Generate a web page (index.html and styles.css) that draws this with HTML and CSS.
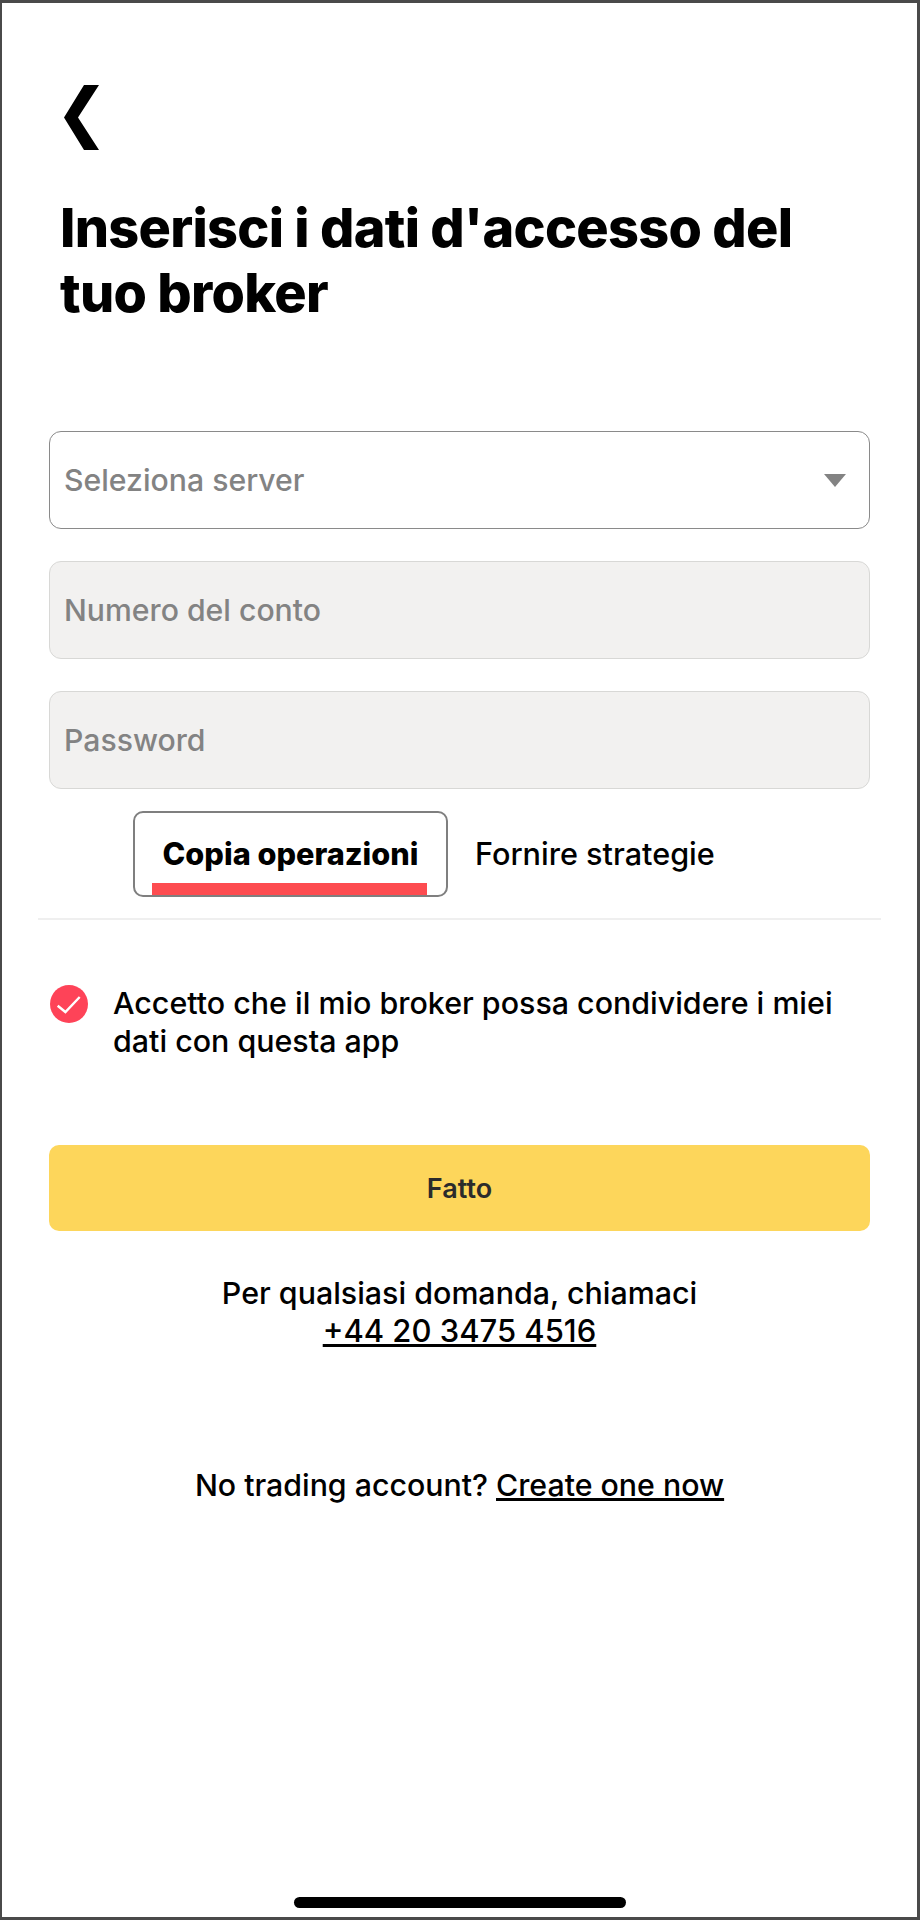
FILE: index.html
```html
<!DOCTYPE html>
<html lang="it">
<head>
<meta charset="UTF-8">
<title>Dati broker</title>
<link rel="stylesheet" href="styles.css">
</head>
<body>

<div class="screen">
  <a class="back-link" href="#">
    <svg width="35" height="65" viewBox="0 0 35 65"><polygon points="20,0 35,0 14,32.5 35,65 20,65 0,32.5" fill="#000"/></svg>
  </a>

  <h1 class="page-title">Inserisci i dati d'accesso del tuo broker</h1>

  <div class="form-fields">
    <div class="field field-select">
      <span>Seleziona server</span>
      <span class="select-arrow"></span>
    </div>
    <div class="field field-disabled"><span>Numero del conto</span></div>
    <div class="field field-disabled"><span>Password</span></div>
  </div>

  <div class="tabs">
    <div class="tab tab-active">Copia operazioni</div>
    <div class="tab">Fornire strategie</div>
  </div>

  <div class="consent">
    <svg class="consent-check" width="38" height="38" viewBox="0 0 38 38">
      <circle cx="19" cy="19" r="19" fill="#fe4358"/>
      <path d="M7.7 20.7L15.4 27L29.7 12" fill="none" stroke="#fff" stroke-width="2.4"/>
    </svg>
    <p>Accetto che il mio broker possa condividere i miei dati con questa app</p>
  </div>

  <button class="done-btn">Fatto</button>

  <p class="help-text">Per qualsiasi domanda, chiamaci<br><a class="help-phone" href="#">+44 20 3475 4516</a></p>

  <p class="signup-text">No trading account? <a href="#">Create one now</a></p>

  <div class="home-bar"></div>
</div>

</body>
</html>
```

FILE: styles.css
```css
body {
  margin: 0;
  font-family: Inter, "Liberation Sans", sans-serif;
  color: #000;
}

a {
  color: inherit;
}

.screen {
  box-sizing: border-box;
  width: 920px;
  height: 1920px;
  border: 3px solid #4a4a4a;
  border-left-width: 2px;
  background: #fff;
  display: flex;
  flex-direction: column;
  padding: 82px 47px 9px 47px;
}

.back-link {
  display: block;
  height: 65px;
  margin-left: 15px;
}

.page-title {
  margin: 45px 0 0 11px;
  width: 780px;
  font-size: 54px;
  line-height: 65px;
  font-weight: 800;
  letter-spacing: -0.72px;
}

/* pola formularza */
.form-fields {
  margin-top: 106px;
  display: flex;
  flex-direction: column;
  gap: 32px;
}

.field {
  box-sizing: border-box;
  height: 98px;
  border-radius: 12px;
  border: 1px solid #d8d8d6;
  padding: 0 14px;
  display: flex;
  align-items: center;
  justify-content: space-between;
  font-size: 30.2px;
  font-weight: 500;
  color: #838383;
}

.field-select {
  border: 1.5px solid #8a8a8a;
  background: #fff;
}

.field-disabled {
  background: #f2f1f0;
}

.select-arrow {
  width: 0;
  height: 0;
  margin-right: 9px;
  border-left: 11px solid transparent;
  border-right: 11px solid transparent;
  border-top: 13px solid #838383;
}

.tabs {
  margin: 22px -11px 0;
  padding: 0 0 21px 95px;
  display: flex;
  align-items: center;
  border-bottom: 2px solid #efefef;
  font-size: 30.6px;
  font-weight: 500;
}

.tab-active {
  box-sizing: border-box;
  position: relative;
  width: 315px;
  height: 86px;
  border: 2px solid #7f7f7f;
  border-radius: 10px;
  display: flex;
  align-items: center;
  justify-content: center;
  padding-bottom: 2px;
  font-size: 30.7px;
  font-weight: 800;
}

.tab-active::after {
  content: "";
  position: absolute;
  left: 17px;
  right: 19px;
  bottom: 0;
  height: 12px;
  background: #fd4c50;
}

.tab:not(.tab-active) {
  margin: 0 0 2px 27px;
}

/* zgoda */
.consent {
  margin-top: 64px;
  display: flex;
  gap: 25px;
}

.consent-check {
  flex-shrink: 0;
  margin: 1px 0 0 1px;
}

.consent p {
  margin: 0;
  font-size: 30.4px;
  line-height: 38px;
  font-weight: 500;
}

.done-btn {
  margin-top: 85px;
  height: 86px;
  border: none;
  border-radius: 10px;
  background: #fdd65b;
  font-family: inherit;
  font-size: 27px;
  font-weight: 600;
  color: #2b2b2b;
}

.help-text {
  margin: 44px 0 0;
  text-align: center;
  font-size: 30.4px;
  line-height: 37px;
  font-weight: 500;
}

.help-phone {
  font-size: 31px;
}

.signup-text {
  margin: 117px 0 0;
  text-align: center;
  font-size: 30.3px;
  line-height: 37px;
  font-weight: 500;
}

.home-bar {
  margin: auto auto 0;
  width: 332px;
  height: 11px;
  border-radius: 6px;
  background: #000;
}
```
